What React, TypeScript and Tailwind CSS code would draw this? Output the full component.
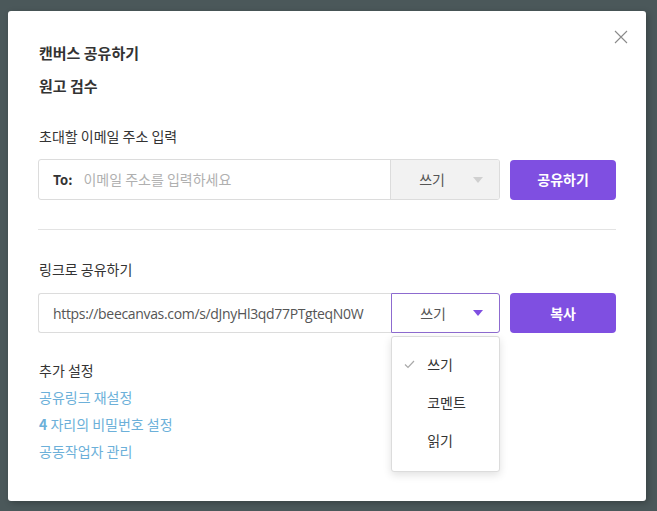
import React from "react";

const font = { fontFamily: '"Noto Sans CJK KR", "Noto Sans", sans-serif' };

function Caret({ color }: { color: string }) {
  return (
    <svg width="10" height="6" viewBox="0 0 10 6" className="shrink-0">
      <path d="M0 0 L10 0 L5 6 Z" fill={color} />
    </svg>
  );
}

export default function App() {
  return (
    <div
      className="w-[657px] h-[511px] bg-[#4b585a] pt-[11px] pl-[8px] text-[#333]"
      style={font}
    >
      <div className="relative w-[638px] h-[490px] bg-white rounded-[3px] shadow-[2px_2px_6px_rgba(0,0,0,0.25)] px-[30px] pt-[25px]">
        <button className="absolute right-[18px] top-[19px] w-[14px] h-[14px] flex items-center justify-center">
          <svg width="14" height="14" viewBox="0 0 14 14">
            <path d="M1 1 L13 13 M13 1 L1 13" stroke="#8a8a8a" strokeWidth="1.1" />
          </svg>
        </button>

        <div className="text-[15px] font-bold leading-[33px] pl-[1px]">캔버스 공유하기</div>
        <div className="text-[15px] font-bold leading-[33px] pl-[1px]">원고 검수</div>

        <div className="mt-[24px] text-[14px] leading-[20px] pl-[1px]">초대할 이메일 주소 입력</div>

        <div className="mt-[13px] flex items-center gap-[10px]">
          <div className="flex h-[41px] w-[463px] border border-[#dcdcdc] rounded-[3px] overflow-hidden">
            <div className="flex-1 flex items-center pl-[14px]">
              <span className="text-[13px] font-bold text-[#333]">To:</span>
              <span className="ml-[11px] text-[14px] text-[#b0b0b0]">이메일 주소를 입력하세요</span>
            </div>
            <div className="w-[109px] bg-[#f2f2f2] border-l border-[#dcdcdc] flex items-center pl-[28px] pr-[16px] justify-between">
              <span className="text-[14px] text-[#555]">쓰기</span>
              <Caret color="#d0d0d0" />
            </div>
          </div>
          <button className="w-[106px] h-[40px] rounded-[4px] bg-[#7f4fe1] text-white text-[14px] font-bold">
            공유하기
          </button>
        </div>

        <div className="mt-[29px] h-px bg-[#e3e3e3]" />

        <div className="mt-[29px] text-[14px] leading-[20px] pl-[1px]">링크로 공유하기</div>

        <div className="mt-[14px] flex items-center gap-[10px]">
          <div className="flex h-[40px] w-[463px]">
            <div className="flex-1 flex items-center pl-[14px] border border-r-0 border-[#dcdcdc] rounded-l-[3px]">
              <span className="text-[14px] text-[#555] tracking-[-0.33px]" style={{ fontFamily: '"Open Sans", "Noto Sans", sans-serif' }}>
                https://beecanvas.com/s/dJnyHl3qd77PTgteqN0W
              </span>
            </div>
            <div className="relative w-[109px] border border-[#8d6bcf] rounded-r-[3px] flex items-center pl-[28px] pr-[16px] justify-between">
              <span className="text-[14px] text-[#555]">쓰기</span>
              <Caret color="#7f4fe1" />
              <div className="absolute left-[-1px] top-[42px] w-[109px] bg-white border border-[#dcdcdc] rounded-[3px] shadow-[0_3px_8px_rgba(0,0,0,0.12)] pt-[8px] pb-[12px] z-10">
                <div className="h-[38px] flex items-center">
                  <svg width="11" height="9" viewBox="0 0 11 9" className="ml-[12px]">
                    <path d="M1 4.5 L4 7.5 L10 1" fill="none" stroke="#a9a9a9" strokeWidth="1.2" />
                  </svg>
                  <span className="ml-[12px] text-[14px] text-[#333]">쓰기</span>
                </div>
                <div className="h-[38px] flex items-center pl-[35px] text-[14px] text-[#333]">코멘트</div>
                <div className="h-[38px] flex items-center pl-[35px] text-[14px] text-[#333]">읽기</div>
              </div>
            </div>
          </div>
          <button className="w-[106px] h-[40px] rounded-[4px] bg-[#7f4fe1] text-white text-[14px] font-bold">
            복사
          </button>
        </div>

        <div className="mt-[24px] text-[14px] leading-[27px] pl-[1px]">
          <div className="text-[#333]">추가 설정</div>
          <div className="text-[#6cb0d9]">공유링크 재설정</div>
          <div className="text-[#6cb0d9]"><span className="font-bold">4</span> 자리의 비밀번호 설정</div>
          <div className="text-[#6cb0d9]">공동작업자 관리</div>
        </div>
      </div>
    </div>
  );
}
